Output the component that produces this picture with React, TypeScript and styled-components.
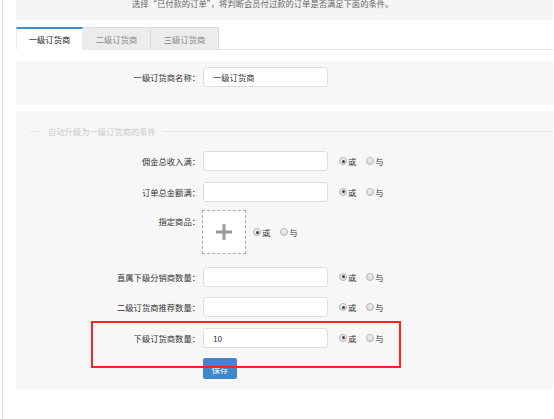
import React from "react";
import styled, { createGlobalStyle } from "styled-components";

const GlobalStyle = createGlobalStyle`
  html, body {
    margin: 0;
    padding: 0;
    background: #fff;
  }
  body {
    font-family: "Noto Sans CJK SC", "Noto Sans", "Liberation Sans", sans-serif;
    font-size: 8.3px;
    color: #333;
  }
`;

const Page = styled.div`
  position: relative;
  margin-left: 2px;
  border-left: 1px solid #e2e2e2;
  padding-left: 13px;
  padding-right: 1px;
  height: 419px;
  overflow: hidden;
`;

const TopBand = styled.div`
  height: 20px;
  background: #f5f5f5;
  overflow: hidden;
`;

const TopText = styled.div`
  margin-top: -3px;
  padding-left: 116px;
  line-height: 12px;
  color: #666;
  white-space: nowrap;
`;

const TabBar = styled.div`
  display: flex;
  margin-top: 7px;
  border-bottom: 1px solid #e6e6e6;
`;

const Tab = styled.div<{ $active?: boolean }>`
  width: ${(p) => (p.$active ? 67 : 68)}px;
  height: 23px;
  box-sizing: border-box;
  margin-bottom: -1px;
  display: flex;
  align-items: center;
  justify-content: center;
  background: ${(p) => (p.$active ? "#fff" : "#ececec")};
  border: 1px solid ${(p) => (p.$active ? "#eaeaea" : "#dcdcdc")};
  border-top: ${(p) => (p.$active ? "2px solid #3c8dc8" : "1px solid #dcdcdc")};
  border-bottom: ${(p) => (p.$active ? "1px solid #fff" : "1px solid #e6e6e6")};
  border-left-width: ${(p) => (p.$active ? "1px" : "0")};
  color: ${(p) => (p.$active ? "#222" : "#888")};
`;

const Panel = styled.div<{ $top: number; $pt: number; $pb: number }>`
  margin-top: ${(p) => p.$top}px;
  padding: ${(p) => p.$pt}px 0 ${(p) => p.$pb}px;
  background: #f7f7f7;
`;

const Legend = styled.div`
  display: flex;
  align-items: center;
  height: 16px;
  padding-left: 14px;
  margin-bottom: 12px;
  color: #c9c9c9;
  &::before {
    content: "";
    width: 10px;
    height: 1px;
    background: #e6e6e6;
    margin-right: 8px;
  }
  &::after {
    content: "";
    flex: 1;
    height: 1px;
    background: #e6e6e6;
    margin-left: 6px;
  }
`;

const Form = styled.div`
  display: flex;
  flex-direction: column;
  gap: 10.5px;
`;

const Row = styled.div<{ $upload?: boolean }>`
  display: flex;
  align-items: ${(p) => (p.$upload ? "flex-start" : "center")};
  margin: ${(p) => (p.$upload ? "-2px 0 2px" : "0")};
`;

const Label = styled.div<{ $upload?: boolean }>`
  width: 184px;
  text-align: right;
  line-height: ${(p) => (p.$upload ? "22px" : "20px")};
  color: #333;
  white-space: nowrap;
`;

const Input = styled.div`
  width: 125px;
  height: 20px;
  box-sizing: border-box;
  margin-left: 3px;
  padding-left: 9px;
  display: flex;
  align-items: center;
  background: #fff;
  border: 1px solid #dedede;
  border-radius: 3px;
  color: #333;
`;

const UploadBox = styled.div`
  width: 44px;
  height: 44px;
  box-sizing: border-box;
  margin-left: 2px;
  border: 1px dashed #aaa;
  background: #fff;
  display: flex;
  align-items: center;
  justify-content: center;
`;

const Choices = styled.div<{ $gap: number }>`
  display: flex;
  align-items: center;
  margin-left: ${(p) => p.$gap}px;
  align-self: center;
`;

const Choice = styled.span`
  display: flex;
  align-items: center;
  margin-right: 10px;
  color: #333;
`;

const Radio = styled.span<{ $checked?: boolean }>`
  position: relative;
  width: 8px;
  height: 8px;
  box-sizing: border-box;
  border-radius: 50%;
  border: 1px solid #b5b5b5;
  background: linear-gradient(#f2f2f2, #dcdcdc);
  margin-right: 1px;
  &::after {
    content: "";
    display: ${(p) => (p.$checked ? "block" : "none")};
    position: absolute;
    left: 1.5px;
    top: 1.5px;
    width: 3px;
    height: 3px;
    border-radius: 50%;
    background: #444;
  }
`;

const SaveButton = styled.div`
  margin-left: 187px;
  width: 34px;
  height: 21px;
  display: flex;
  align-items: center;
  justify-content: center;
  background: #3f87c8;
  border-radius: 2px;
  color: #fff;
`;

const Highlight = styled.div`
  position: absolute;
  left: 88px;
  top: 321px;
  width: 310px;
  height: 47px;
  box-sizing: border-box;
  border: 2px solid #f22;
  pointer-events: none;
`;

function OrAnd({ gap }: { gap: number }) {
  return (
    <Choices $gap={gap}>
      <Choice>
        <Radio $checked />或
      </Choice>
      <Choice>
        <Radio />与
      </Choice>
    </Choices>
  );
}

const fields: { label: string; value?: string }[] = [
  { label: "直属下级分销商数量：" },
  { label: "二级订货商推荐数量：" },
  { label: "下级订货商数量：", value: "10" },
];

export default function App() {
  return (
    <>
      <GlobalStyle />
      <Page>
        <TopBand>
          <TopText>选择“已付款的订单”，将判断会员付过款的订单是否满足下面的条件。</TopText>
        </TopBand>
        <TabBar>
          <Tab $active>一级订货商</Tab>
          <Tab>二级订货商</Tab>
          <Tab>三级订货商</Tab>
        </TabBar>
        <Panel $top={11} $pt={6} $pb={18}>
          <Row>
            <Label>一级订货商名称：</Label>
            <Input>一级订货商</Input>
          </Row>
        </Panel>
        <Panel $top={6} $pt={12} $pb={10}>
          <Legend>自动升级为一级订货商的条件</Legend>
          <Form>
            <Row>
              <Label>佣金总收入满：</Label>
              <Input />
              <OrAnd gap={11} />
            </Row>
            <Row>
              <Label>订单总金额满：</Label>
              <Input />
              <OrAnd gap={11} />
            </Row>
            <Row $upload>
              <Label $upload>指定商品：</Label>
              <UploadBox>
                <svg width="16" height="16" viewBox="0 0 16 16">
                  <rect x="6.5" y="0" width="3" height="16" fill="#999" />
                  <rect x="0" y="6.5" width="16" height="3" fill="#999" />
                </svg>
              </UploadBox>
              <OrAnd gap={7} />
            </Row>
            {fields.map((f) => (
              <Row key={f.label}>
                <Label>{f.label}</Label>
                <Input>{f.value}</Input>
                <OrAnd gap={11} />
              </Row>
            ))}
            <SaveButton>保存</SaveButton>
          </Form>
        </Panel>
        <Highlight />
      </Page>
    </>
  );
}
